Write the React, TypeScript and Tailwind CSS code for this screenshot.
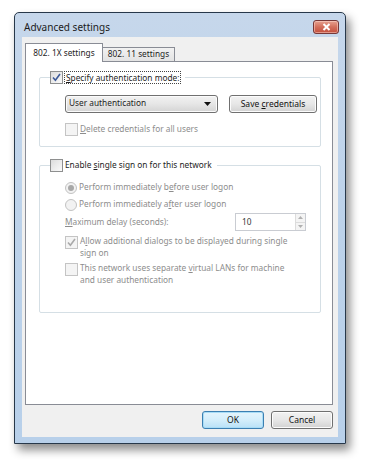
import React from "react";

const font = "font-['Noto_Sans','Open_Sans',sans-serif]";

// underlined access-key letter
function U({ children }: { children: React.ReactNode }) {
  return <span className="underline">{children}</span>;
}

function Check({ checked = false, disabled = false }: { checked?: boolean; disabled?: boolean }) {
  return (
    <div
      className={
        "flex h-[13px] w-[13px] shrink-0 items-center justify-center border " +
        (disabled ? "border-[#c4c4c4] bg-[#f4f4f4]" : "border-[#8e8f8f] bg-gradient-to-br from-[#dcdcdc] to-[#fbfbfb]")
      }
    >
      {checked && (
        <svg width="11" height="11" viewBox="0 0 11 11">
          <path
            d="M2 5.5 L4.4 8.2 L9 2"
            fill="none"
            stroke={disabled ? "#a9a9a9" : "#3d5a99"}
            strokeWidth="1.6"
          />
        </svg>
      )}
    </div>
  );
}

function Radio({ checked = false }: { checked?: boolean }) {
  return (
    <div className="flex h-[12px] w-[12px] shrink-0 items-center justify-center rounded-full border border-[#c2c2c2] bg-[#f2f2f2]">
      {checked && <div className="h-[6px] w-[6px] rounded-full bg-[#a8a8a8]" />}
    </div>
  );
}

function Btn({ children, primary = false, w }: { children: React.ReactNode; primary?: boolean; w: string }) {
  return (
    <div
      className={
        "flex h-[18px] items-center justify-center rounded-[3px] border text-[8.5px] text-[#111] " +
        w +
        " " +
        (primary
          ? "border-[#3c7fb1] bg-gradient-to-b from-[#e5f4fc] via-[#d4eefb] to-[#b9e1f7] shadow-[inset_0_0_0_1px_#a8dcf6]"
          : "border-[#707070] bg-gradient-to-b from-[#f2f2f2] via-[#e7e7e7] to-[#d2d2d2] shadow-[inset_0_0_0_1px_#fcfcfc]")
      }
    >
      {children}
    </div>
  );
}

export default function App() {
  return (
    <div className={"h-[463px] w-[367px] overflow-hidden bg-white pl-[14px] pt-[12px] " + font}>
      <div className="flex h-[432px] w-[332px] flex-col rounded-t-[5px] border border-[#27384a] bg-gradient-to-b from-[#c6d7eb] via-[#bcd2ea] to-[#b8d0ea] px-[7px] shadow-[4px_6px_10px_rgba(0,0,0,0.45)]">
        {/* title bar */}
        <div className="flex h-[24px] shrink-0 items-center justify-between">
          <span className="pl-[2px] pt-[5px] text-[10px] text-[#1b1b1b]">Advanced settings</span>
          <div className="mr-[-1px] mt-[3px] flex h-[14px] w-[26px] items-center justify-center rounded-[3px] border border-[#763838] bg-gradient-to-b from-[#e6a190] via-[#d36f5c] to-[#c24e3c] shadow-[inset_0_0_0_1px_rgba(255,220,210,0.5)]">
            <svg width="9" height="8" viewBox="0 0 9 8">
              <path d="M1.5 1 L7.5 7 M7.5 1 L1.5 7" stroke="#ffffff" strokeWidth="2" />
            </svg>
          </div>
        </div>

        {/* client area */}
        <div className="flex h-[400px] flex-col bg-[#f0f0f0] pl-[3px] pr-[5px] pt-[6px] text-[8.3px] text-[#1e1e1e]">
          {/* tabs */}
          <div className="flex h-[18px] items-end">
            <div className="relative z-10 -mb-px flex h-[19px] w-[78px] items-center justify-center border border-b-0 border-[#898c95] bg-white">
              802. 1X settings
            </div>
            <div className="flex h-[14px] w-[72px] items-center justify-center border border-b-0 border-l-0 border-[#898c95] bg-gradient-to-b from-[#f2f2f2] to-[#e3e3e3]">
              802. 11 settings
            </div>
          </div>

          {/* panel */}
          <div className="flex h-[344px] flex-col border border-[#898c95] bg-white">
            {/* group 1 */}
            <div className="ml-[13px] mt-[15px] h-[70px] w-[282px] rounded-[2px] border border-[#d5dfe5]">
              <div className="-mt-[7px] ml-[10px] flex w-fit items-center bg-white pr-[4px]">
                <Check checked />
                <span className="ml-[1px] border border-dotted border-[#444] px-[1px] leading-[11px]">
                  <U>S</U>pecify authentication mode:
                </span>
              </div>
              <div className="ml-[25px] mt-[10px] flex items-center">
                <div className="flex h-[18px] w-[153px] items-center justify-between rounded-[3px] border border-[#707070] bg-gradient-to-b from-[#f2f2f2] via-[#e6e6e6] to-[#d4d4d4] pl-[3px] pr-[6px] shadow-[inset_0_0_0_1px_#fbfbfb]">
                  <span>User authentication</span>
                  <svg width="7" height="4" viewBox="0 0 7 4">
                    <path d="M0 0 H7 L3.5 4 Z" fill="#111" />
                  </svg>
                </div>
                <Btn w="w-[88px] ml-[11px] mt-px">
                  <span>
                    Save <U>c</U>redentials
                  </span>
                </Btn>
              </div>
              <div className="ml-[25px] mt-[10px] flex items-center text-[#8d8d8d]">
                <Check disabled />
                <span className="ml-[2px]">
                  <U>D</U>elete credentials for all users
                </span>
              </div>
            </div>

            {/* group 2 */}
            <div className="ml-[13px] mt-[18px] h-[148px] w-[282px] rounded-[2px] border border-[#d5dfe5]">
              <div className="-mt-[7px] ml-[10px] flex w-fit items-center bg-white pr-[5px]">
                <Check />
                <span className="ml-[2px]">
                  Enable <U>s</U>ingle sign on for this network
                </span>
              </div>
              <div className="pl-[25px] text-[#8d8d8d]">
                <div className="mt-[9px] flex h-[13px] items-center">
                  <Radio checked />
                  <span className="ml-[2px]">
                    Perform immediately b<U>e</U>fore user logon
                  </span>
                </div>
                <div className="mt-[4px] flex h-[13px] items-center">
                  <Radio />
                  <span className="ml-[2px]">
                    Perform immediately a<U>f</U>ter user logon
                  </span>
                </div>
                <div className="mt-[2px] flex h-[18px] items-center">
                  <span className="w-[170px]">
                    <U>M</U>aximum delay (seconds):
                  </span>
                  <div className="flex h-[18px] w-[71px] items-stretch border border-[#c9ccd2] bg-white">
                    <span className="flex flex-1 items-center pl-[6px] text-[#3a3a3a]">10</span>
                    <div className="flex w-[10px] flex-col border-l border-[#dcdcdc] bg-[#f4f4f4]">
                      <div className="flex flex-1 items-center justify-center border-b border-[#dcdcdc]">
                        <svg width="5" height="3" viewBox="0 0 5 3">
                          <path d="M0 3 L2.5 0 L5 3 Z" fill="#b0b0b0" />
                        </svg>
                      </div>
                      <div className="flex flex-1 items-center justify-center">
                        <svg width="5" height="3" viewBox="0 0 5 3">
                          <path d="M0 0 L2.5 3 L5 0 Z" fill="#b0b0b0" />
                        </svg>
                      </div>
                    </div>
                  </div>
                </div>
                <div className="mt-[4px] flex items-start">
                  <div className="mt-[1px]">
                    <Check checked disabled />
                  </div>
                  <div className="ml-[2px] whitespace-nowrap leading-[12px]">
                    <div>
                      A<U>l</U>low additional dialogs to be displayed during single
                    </div>
                    <div>sign on</div>
                  </div>
                </div>
                <div className="mt-[3px] flex items-start">
                  <div className="mt-[1px]">
                    <Check disabled />
                  </div>
                  <div className="ml-[2px] whitespace-nowrap leading-[12px]">
                    <div>
                      This network uses separate <U>v</U>irtual LANs for machine
                    </div>
                    <div>and user authentication</div>
                  </div>
                </div>
              </div>
            </div>
          </div>

          {/* buttons */}
          <div className="mt-[6px] flex justify-end gap-[7px]">
            <Btn primary w="w-[62px]">
              OK
            </Btn>
            <Btn w="w-[62px]">Cancel</Btn>
          </div>
        </div>
      </div>
    </div>
  );
}
